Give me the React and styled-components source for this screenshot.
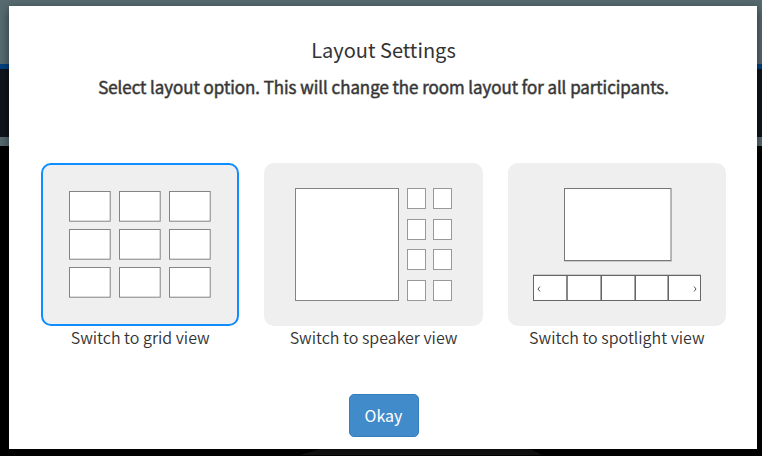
/*
	Composant LayoutSettings : choix de la disposition de la salle
*/

import React, { useState } from 'react'
import styled, { createGlobalStyle } from 'styled-components'

// css
const GlobalStyle = createGlobalStyle`
	* {
		box-sizing: border-box;
	}
	body {
		margin: 0;
		background: #000;
		color: #333;
		font-family: "Noto Sans CJK SC", "Open Sans", sans-serif;
	}
`
const StyleRoom = styled.div`
	display: flex;
	flex-direction: column;
	min-height: 100vh;
`
const StyleBand = styled.div`
	height: ${props => props.$height}px;
	background: ${props => props.$background};
`
const StyleTable = styled.svg`
	display: block;
	width: 100%;
	height: 7px;
	margin-top: auto;
`
const StyleOverlay = styled.div`
	position: absolute;
	inset: 0;
	display: flex;
	padding: 6px 5px 7px 9px;
`
const StyleWindow = styled.section`
	display: flex;
	flex: 1;
	flex-direction: column;
	align-items: center;
	padding: 28px 31px 12px 32px;
	background: #fff;
	box-shadow: 0 3px 9px rgba(0, 0, 0, 0.5);
`
const StyleTitle = styled.h1`
	margin: 0;
	font-size: 20px;
	font-weight: 400;
	line-height: 32px;
`
const StyleSubtitle = styled.p`
	margin: 8px 0 0;
	font-size: 17px;
	font-weight: 350;
	line-height: 26px;
	text-align: center;
	-webkit-text-stroke: 1px #3339;
`
const StyleOptions = styled.div`
	display: grid;
	grid-template-columns: 10fr 11fr 11fr;
	gap: 25px;
	width: 100%;
	margin-top: 63px;
`
const StyleOption = styled.label`
	position: relative;
	display: flex;
	flex-direction: column;
	cursor: pointer;
	font-size: 16px;
	font-weight: 350;
	line-height: 22px;
	text-align: center;
`
const StyleRadio = styled.input`
	position: absolute;
	inset: 0;
	margin: 0;
	opacity: 0;
	cursor: pointer;
`
const StylePreview = styled.span`
	display: flex;
	align-items: center;
	justify-content: center;
	padding: 23px 0 22px;
	border: solid 2px #efefef;
	border-radius: 10px;
	background: #efefef;

	${StyleRadio}:checked + & {
		border-color: #0d8dff;
	}
`
const StyleDrawing = styled.svg`
	display: block;
	height: 114px;
	fill: #fff;
	stroke: #848484;
`
const StyleButton = styled.button`
	width: 70px;
	height: 43px;
	margin-top: auto;
	padding: 0 0 2px;
	border: solid 1px #357ebd;
	border-radius: 5px;
	background: #428bca;
	color: #fff;
	font-family: inherit;
	font-size: 16px;
	cursor: pointer;
`

// Dessins des dispositions
function GridDrawing() {
	return (
		<StyleDrawing width="142" viewBox="0 0 142 114" aria-hidden="true">
			{[4, 42, 80].map((y) => [0, 50, 100].map((x) => (
				<rect key={`${x}-${y}`} x={x + 0.5} y={y - 0.5} width="40.7" height="29.7" />
			)))}
		</StyleDrawing>
	)
}

function SpeakerDrawing() {
	return (
		<StyleDrawing width="157" viewBox="0 0 157 114" aria-hidden="true">
			<rect x="0.5" y="0.5" width="103" height="112" />
			{[0, 31, 61, 92].map((y) => [112, 138].map((x) => (
				<rect key={`${x}-${y}`} x={x + 0.5} y={y + 0.5} width="18" height="20" stroke="#999" />
			)))}
		</StyleDrawing>
	)
}

function SpotlightDrawing() {
	return (
		<StyleDrawing width="168" viewBox="0 0 168 114" aria-hidden="true">
			<path d="M31 73.5h108" stroke="#ccc" />
			<rect x="31.5" y="0.5" width="106.5" height="72" stroke="#777" />
			<path d="M0 86.5h168" stroke="#ccc" />
			<rect x="0.5" y="87.5" width="167" height="25" stroke="#666" />
			<path d="M34 88v24M68.2 88v24M102.2 88v24M135.2 88v24" stroke="#555" strokeWidth="1.4" />
			<path d="M7 98.5l-2 2.5 2 2.5M161 98.5l2 2.5-2 2.5" fill="none" stroke="#555" />
		</StyleDrawing>
	)
}

const layouts = [
	{ id: 'grid', text: 'Switch to grid view', Drawing: GridDrawing },
	{ id: 'speaker', text: 'Switch to speaker view', Drawing: SpeakerDrawing },
	{ id: 'spotlight', text: 'Switch to spotlight view', Drawing: SpotlightDrawing },
]

// Composant
function LayoutSettings() {
	const [layout, setLayout] = useState('grid')

	return (
		<StyleWindow role="dialog" aria-labelledby="layout-title">
			<StyleTitle id="layout-title">Layout Settings</StyleTitle>
			<StyleSubtitle>
				Select layout option. This will change the room layout for all participants.
			</StyleSubtitle>
			<StyleOptions role="radiogroup" aria-labelledby="layout-title">
				{layouts.map(({ id, text, Drawing }) => (
					<StyleOption key={id}>
						<StyleRadio
							name="layout"
							type="radio"
							value={id}
							checked={layout === id}
							onChange={() => setLayout(id)}
						/>
						<StylePreview>
							<Drawing />
						</StylePreview>
						{text}
					</StyleOption>
				))}
			</StyleOptions>
			<StyleButton type="button">Okay</StyleButton>
		</StyleWindow>
	)
}

function App() {
	return (
		<>
			<GlobalStyle />
			{/* La salle derrière la fenêtre */}
			<StyleRoom>
				<StyleBand $height={64} $background="#566a70" />
				<StyleBand $height={5} $background="#00427f" />
				<StyleBand $height={68} $background="#10151c" />
				<StyleBand $height={9} $background="#566a70" />
				<StyleTable viewBox="0 0 762 7" aria-hidden="true">
					<path d="M300 6L320 0H530L542 6Z" fill="#151515" />
				</StyleTable>
			</StyleRoom>
			<StyleOverlay>
				<LayoutSettings />
			</StyleOverlay>
		</>
	)
}

export default App
